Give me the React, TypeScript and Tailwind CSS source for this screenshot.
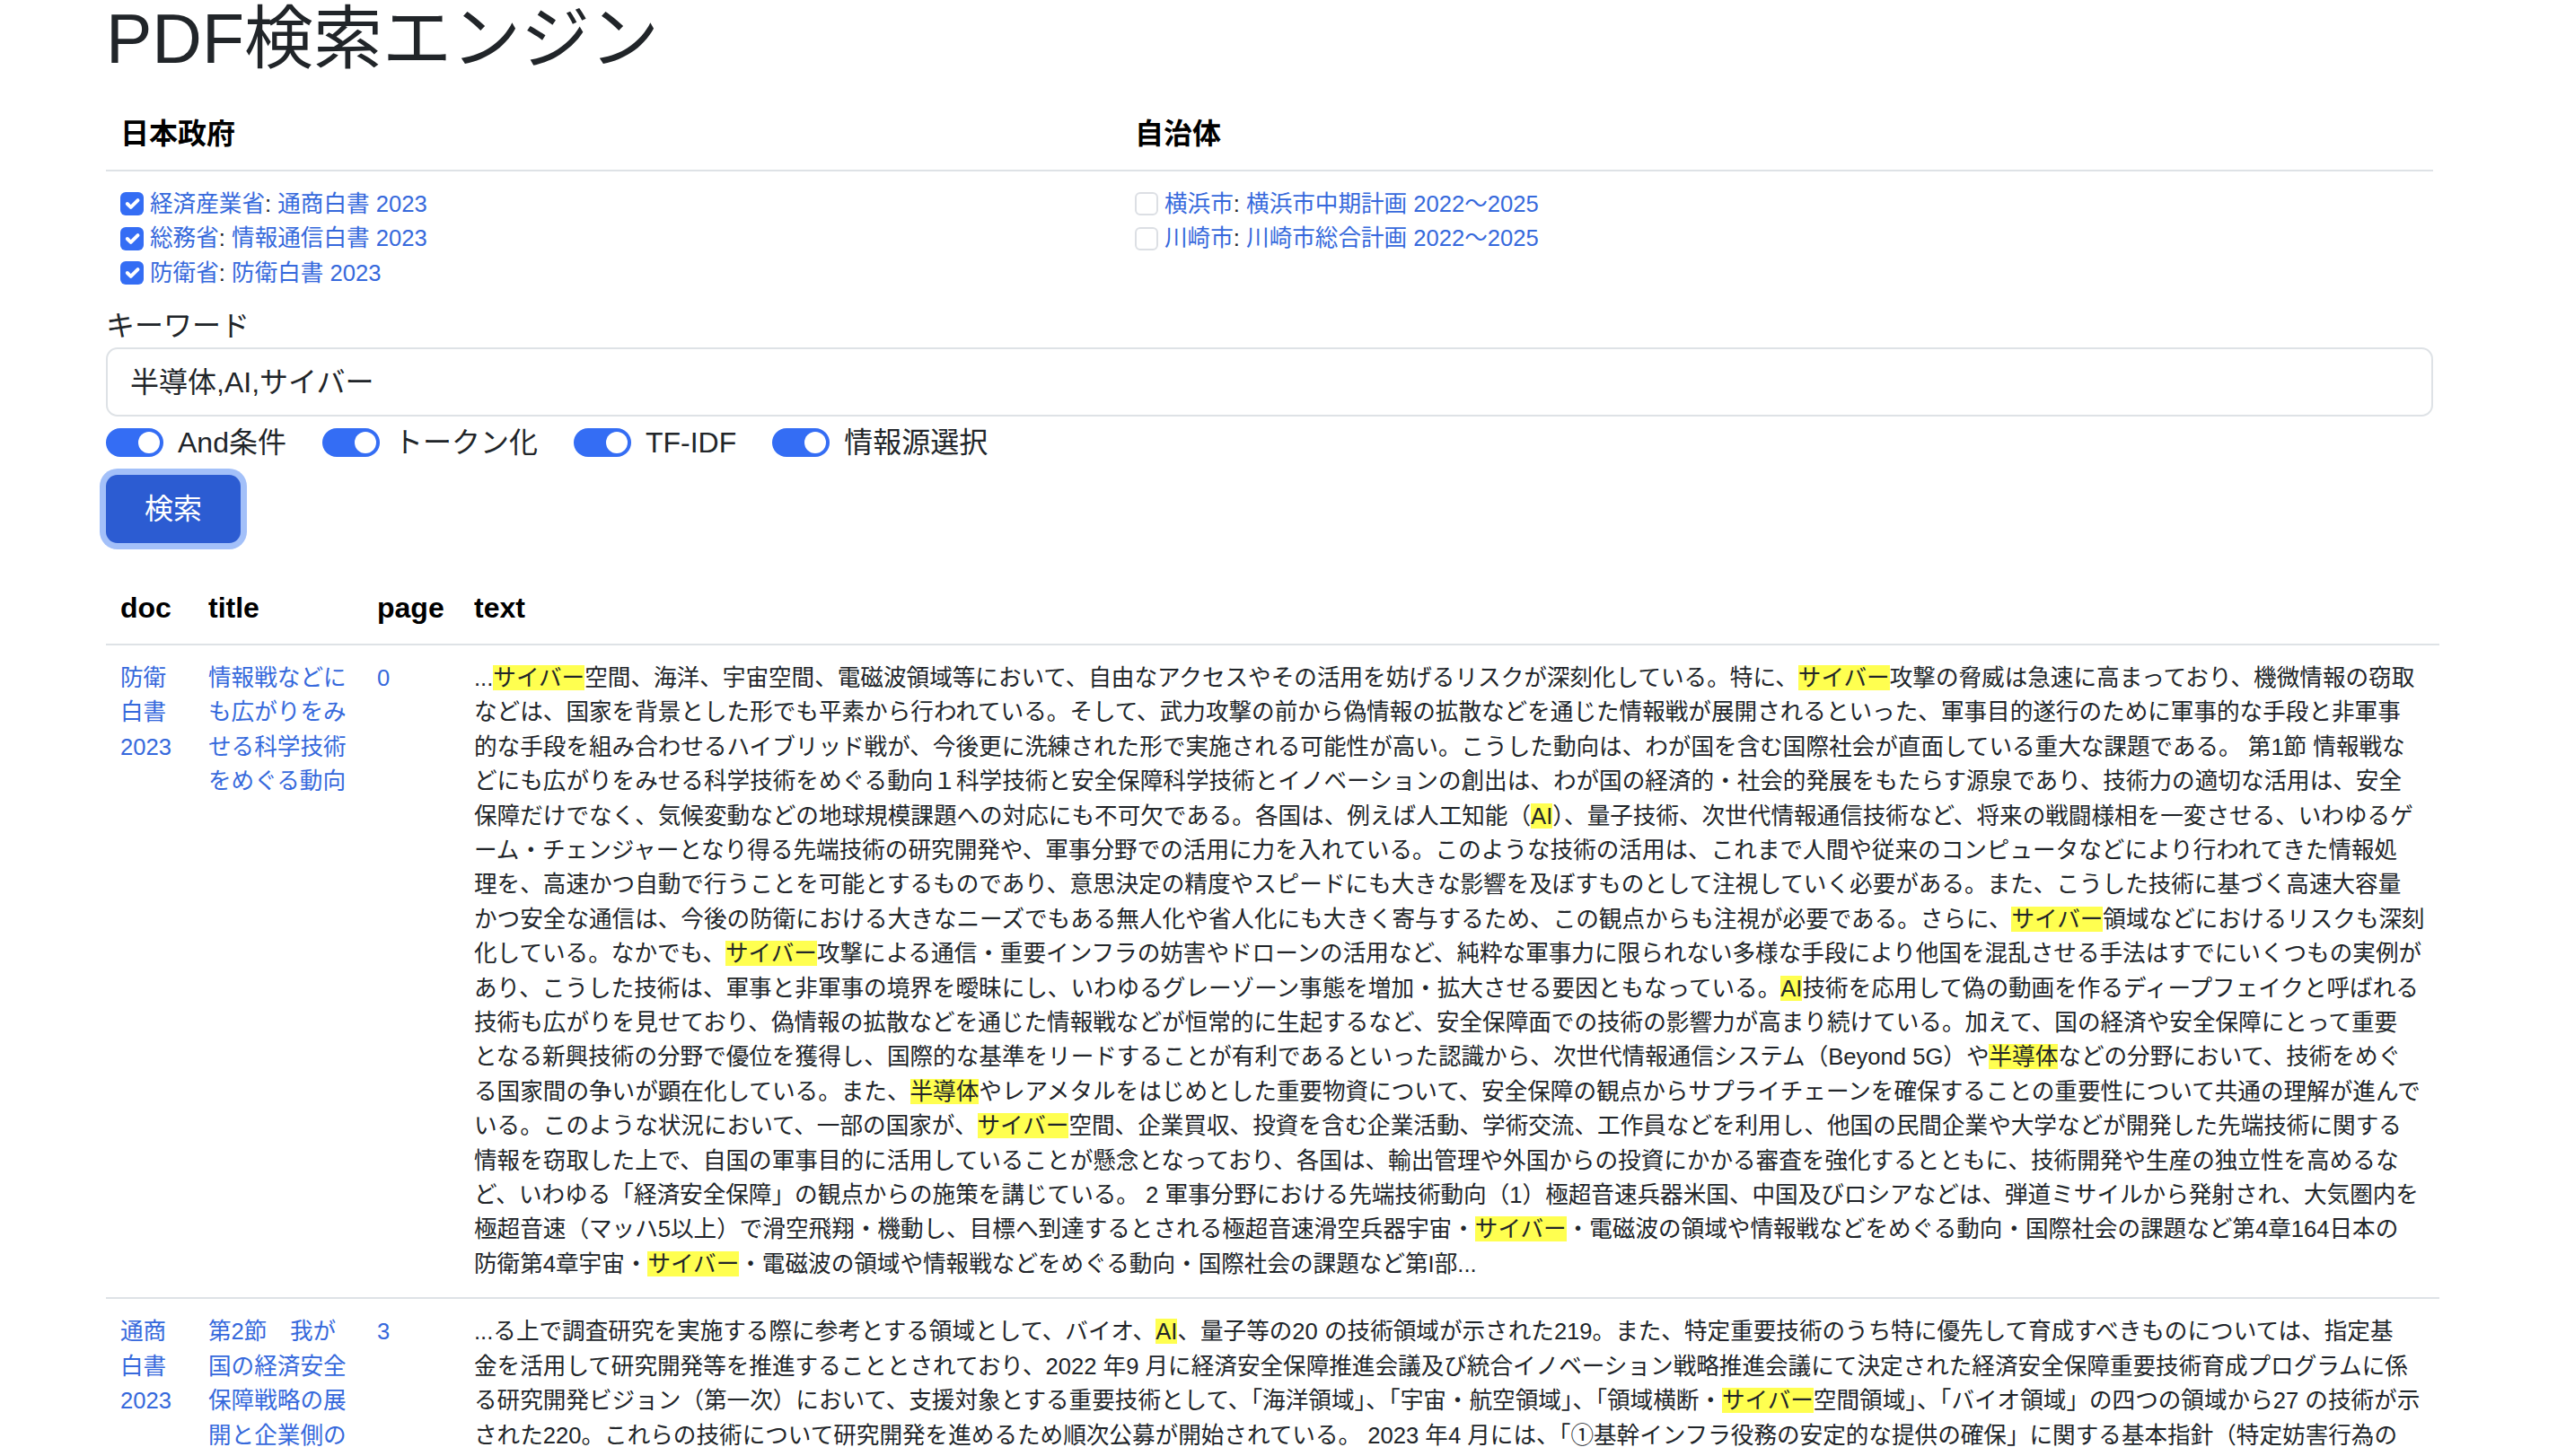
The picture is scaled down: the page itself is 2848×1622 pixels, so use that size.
import React from "react";

const BLUE = "bg-[#346df4]";

function renderLine(s: string) {
  const parts = s.split(/\[([^\]]+)\]/);
  return parts.map((p, i) =>
    i % 2 === 1 ? (
      <span key={i} className="bg-[#ffff50]">
        {p}
      </span>
    ) : (
      <React.Fragment key={i}>{p}</React.Fragment>
    )
  );
}

function CheckBox({ checked }: { checked: boolean }) {
  return checked ? (
    <span className={`flex h-[26px] w-[26px] shrink-0 items-center justify-center rounded-[6px] ${BLUE}`}>
      <svg viewBox="0 0 20 20" className="h-full w-full">
        <path d="M6 10l3 3l6-6" fill="none" stroke="#fff" strokeWidth="3" strokeLinecap="round" strokeLinejoin="round" />
      </svg>
    </span>
  ) : (
    <span className="h-[26px] w-[26px] shrink-0 rounded-[6px] border-2 border-[#dcdfe4] bg-white" />
  );
}

function Source({ checked, org, title }: { checked: boolean; org: string; title: string }) {
  return (
    <div className="flex h-[38.4px] items-center gap-[7px] text-[25.6px] leading-[38.4px]">
      <CheckBox checked={checked} />
      <span className="whitespace-nowrap">
        <span className="text-[#3669dc]">{org}</span>
        <span>: </span>
        <span className="text-[#3669dc]">{title}</span>
      </span>
    </div>
  );
}

function Toggle({ label }: { label: string }) {
  return (
    <div className="flex items-center gap-[16px]">
      <span className={`flex h-[32px] w-[64px] items-center justify-end rounded-full pr-[4px] ${BLUE}`}>
        <span className="h-[24px] w-[24px] rounded-full bg-white" />
      </span>
      <span className="text-[32px] leading-[48px]">{label}</span>
    </div>
  );
}

const row1Text = [
  "...[サイバー]空間、海洋、宇宙空間、電磁波領域等において、自由なアクセスやその活用を妨げるリスクが深刻化している。特に、[サイバー]攻撃の脅威は急速に高まっており、機微情報の窃取",
  "などは、国家を背景とした形でも平素から行われている。そして、武力攻撃の前から偽情報の拡散などを通じた情報戦が展開されるといった、軍事目的遂行のために軍事的な手段と非軍事",
  "的な手段を組み合わせるハイブリッド戦が、今後更に洗練された形で実施される可能性が高い。こうした動向は、わが国を含む国際社会が直面している重大な課題である。 第1節 情報戦な",
  "どにも広がりをみせる科学技術をめぐる動向１科学技術と安全保障科学技術とイノベーションの創出は、わが国の経済的・社会的発展をもたらす源泉であり、技術力の適切な活用は、安全",
  "保障だけでなく、気候変動などの地球規模課題への対応にも不可欠である。各国は、例えば人工知能（[AI]）、量子技術、次世代情報通信技術など、将来の戦闘様相を一変させる、いわゆるゲ",
  "ーム・チェンジャーとなり得る先端技術の研究開発や、軍事分野での活用に力を入れている。このような技術の活用は、これまで人間や従来のコンピュータなどにより行われてきた情報処",
  "理を、高速かつ自動で行うことを可能とするものであり、意思決定の精度やスピードにも大きな影響を及ぼすものとして注視していく必要がある。また、こうした技術に基づく高速大容量",
  "かつ安全な通信は、今後の防衛における大きなニーズでもある無人化や省人化にも大きく寄与するため、この観点からも注視が必要である。さらに、[サイバー]領域などにおけるリスクも深刻",
  "化している。なかでも、[サイバー]攻撃による通信・重要インフラの妨害やドローンの活用など、純粋な軍事力に限られない多様な手段により他国を混乱させる手法はすでにいくつもの実例が",
  "あり、こうした技術は、軍事と非軍事の境界を曖昧にし、いわゆるグレーゾーン事態を増加・拡大させる要因ともなっている。[AI]技術を応用して偽の動画を作るディープフェイクと呼ばれる",
  "技術も広がりを見せており、偽情報の拡散などを通じた情報戦などが恒常的に生起するなど、安全保障面での技術の影響力が高まり続けている。加えて、国の経済や安全保障にとって重要",
  "となる新興技術の分野で優位を獲得し、国際的な基準をリードすることが有利であるといった認識から、次世代情報通信システム（Beyond 5G）や[半導体]などの分野において、技術をめぐ",
  "る国家間の争いが顕在化している。また、[半導体]やレアメタルをはじめとした重要物資について、安全保障の観点からサプライチェーンを確保することの重要性について共通の理解が進んで",
  "いる。このような状況において、一部の国家が、[サイバー]空間、企業買収、投資を含む企業活動、学術交流、工作員などを利用し、他国の民間企業や大学などが開発した先端技術に関する",
  "情報を窃取した上で、自国の軍事目的に活用していることが懸念となっており、各国は、輸出管理や外国からの投資にかかる審査を強化するとともに、技術開発や生産の独立性を高めるな",
  "ど、いわゆる「経済安全保障」の観点からの施策を講じている。 2 軍事分野における先端技術動向（1）極超音速兵器米国、中国及びロシアなどは、弾道ミサイルから発射され、大気圏内を",
  "極超音速（マッハ5以上）で滑空飛翔・機動し、目標へ到達するとされる極超音速滑空兵器宇宙・[サイバー]・電磁波の領域や情報戦などをめぐる動向・国際社会の課題など第4章164日本の",
  "防衛第4章宇宙・[サイバー]・電磁波の領域や情報戦などをめぐる動向・国際社会の課題など第I部...",
];

const row2Text = [
  "...る上で調査研究を実施する際に参考とする領域として、バイオ、[AI]、量子等の20 の技術領域が示された219。また、特定重要技術のうち特に優先して育成すべきものについては、指定基",
  "金を活用して研究開発等を推進することとされており、2022 年9 月に経済安全保障推進会議及び統合イノベーション戦略推進会議にて決定された経済安全保障重要技術育成プログラムに係",
  "る研究開発ビジョン（第一次）において、支援対象とする重要技術として、「海洋領域」、「宇宙・航空領域」、「領域横断・[サイバー]空間領域」、「バイオ領域」の四つの領域から27 の技術が示",
  "された220。これらの技術について研究開発を進めるため順次公募が開始されている。 2023 年4 月には、「①基幹インフラ役務の安定的な提供の確保」に関する基本指針（特定妨害行為の",
];

const rows = [
  {
    doc: ["防衛", "白書", "2023"],
    title: ["情報戦などに", "も広がりをみ", "せる科学技術", "をめぐる動向"],
    page: "0",
    text: row1Text,
  },
  {
    doc: ["通商", "白書", "2023"],
    title: ["第2節　我が", "国の経済安全", "保障戦略の展", "開と企業側の"],
    page: "3",
    text: row2Text,
  },
];

export default function App() {
  return (
    <div className="min-h-[1622px] bg-white font-['Liberation_Sans','Noto_Sans_CJK_JP',sans-serif] text-[#212529]">
      <div className="ml-[118px] w-[2592px]">
        <h1 className="mt-[-3px] mb-[20px] text-[77px] font-normal leading-[92px]">PDF検索エンジン</h1>

        <div className="grid grid-cols-[1130px_1fr]">
          <div className="border-b-2 border-[#dee2e6] px-[16px] py-[16px] text-[32px] font-bold leading-[48px] text-black">日本政府</div>
          <div className="border-b-2 border-[#dee2e6] px-[16px] py-[16px] text-[32px] font-bold leading-[48px] text-black">自治体</div>
          <div className="px-[16px] pt-[17px] pb-[16px]">
            <Source checked org="経済産業省" title="通商白書 2023" />
            <Source checked org="総務省" title="情報通信白書 2023" />
            <Source checked org="防衛省" title="防衛白書 2023" />
          </div>
          <div className="px-[16px] pt-[17px] pb-[16px]">
            <Source checked={false} org="横浜市" title="横浜市中期計画 2022〜2025" />
            <Source checked={false} org="川崎市" title="川崎市総合計画 2022〜2025" />
          </div>
        </div>

        <div className="text-[32px] leading-[48px]">キーワード</div>
        <div className="flex h-[76.8px] items-center rounded-[12.8px] border-2 border-[#dee2e6] px-[25px] text-[32px]">
          半導体,AI,サイバー
        </div>

        <div className="mt-[5px] flex h-[48px] items-center gap-[40px]">
          <Toggle label="And条件" />
          <Toggle label="トークン化" />
          <Toggle label="TF-IDF" />
          <Toggle label="情報源選択" />
        </div>

        <div className="mt-[12px]">
          <button className="flex h-[76px] w-[150px] items-center justify-center rounded-[12.8px] bg-[#2c5cd2] text-[32px] text-white ring-[7px] ring-[#a3c0f9]">
            検索
          </button>
        </div>

        <div className="mt-[32px] grid grid-cols-[98px_188px_108px_1fr]">
          {["doc", "title", "page", "text"].map((h) => (
            <div key={h} className="border-b-2 border-[#dee2e6] px-[16px] py-[16px] text-[32px] font-bold leading-[48px] text-black">
              {h}
            </div>
          ))}
          {rows.map((r, ri) => (
            <React.Fragment key={ri}>
              <div className="border-b-2 border-[#dee2e6] px-[16px] pt-[17px] pb-[18px] text-[25.6px] leading-[38.4px] text-[#3669dc]">
                {r.doc.map((d, i) => (
                  <div key={i} className="whitespace-nowrap">{d}</div>
                ))}
              </div>
              <div className="border-b-2 border-[#dee2e6] px-[16px] pt-[17px] pb-[18px] text-[25.6px] leading-[38.4px] text-[#3669dc]">
                {r.title.map((d, i) => (
                  <div key={i} className="whitespace-nowrap">{d}</div>
                ))}
              </div>
              <div className="border-b-2 border-[#dee2e6] px-[16px] pt-[17px] pb-[18px] text-[25.6px] leading-[38.4px] text-[#3669dc]">
                {r.page}
              </div>
              <div className="border-b-2 border-[#dee2e6] px-[16px] pt-[17px] pb-[18px] text-[25.6px] leading-[38.4px]">
                {r.text.map((t, i) => (
                  <div key={i} className="whitespace-nowrap">{renderLine(t)}</div>
                ))}
              </div>
            </React.Fragment>
          ))}
        </div>
      </div>
    </div>
  );
}
